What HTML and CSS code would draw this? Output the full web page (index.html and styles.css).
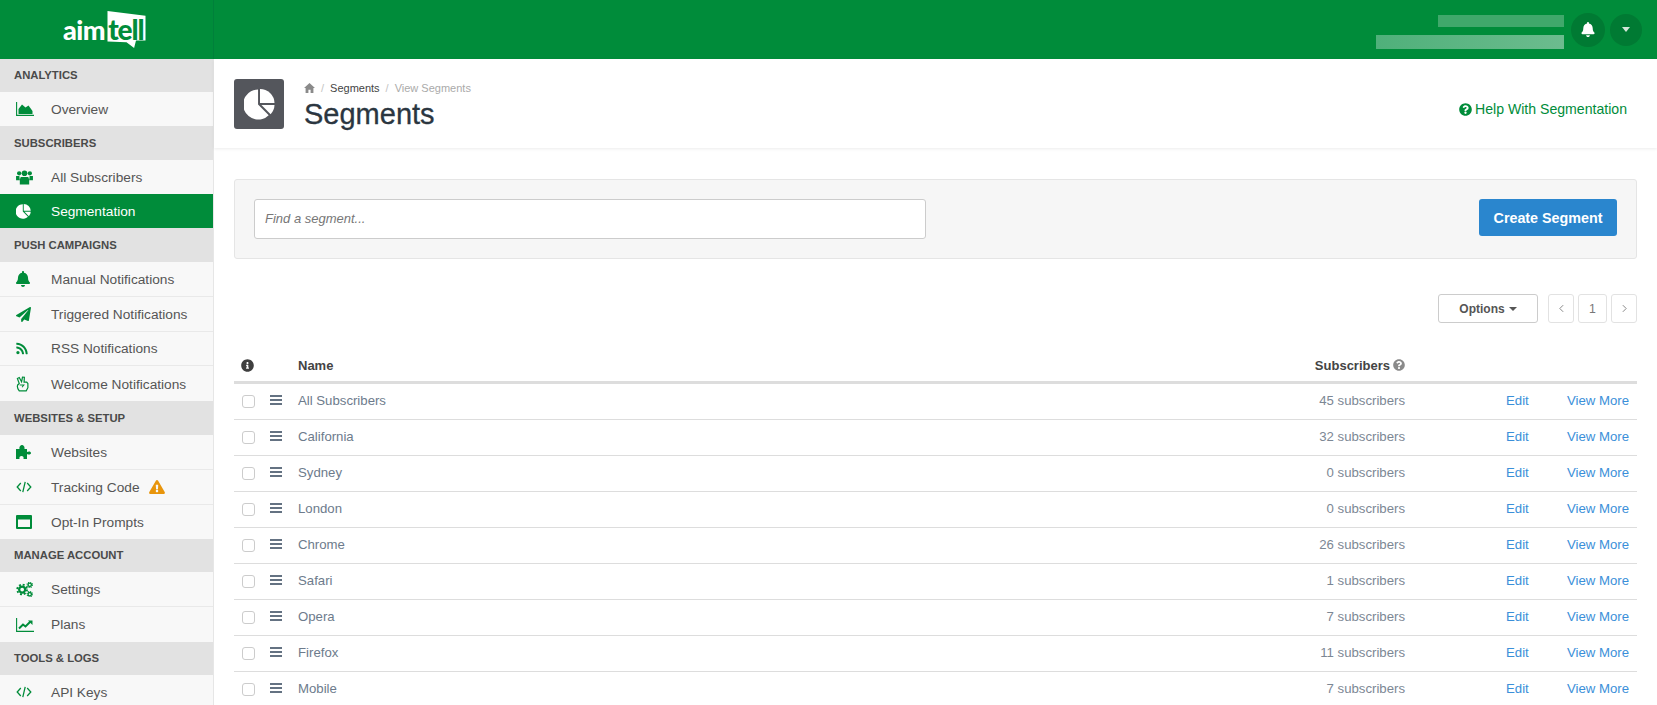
FILE: index.html
```html
<!DOCTYPE html>
<html lang="en">
<head>
<meta charset="utf-8">
<title>Segments</title>
<link rel="stylesheet" href="styles.css">
</head>
<body>
<svg class="defs" width="0" height="0" aria-hidden="true">
  <symbol id="i-pie" viewBox="0 0 32 32"><path d="M14.500 .5A15.500 15.500 0 1 0 25.500 27L14.500 16Z"/><path d="M16.500 0A15 15 0 0 1 31.500 14.500H16.500Z"/><path d="M18 16.500H31.500A15 15 0 0 1 27.500 26Z"/></symbol>
  <symbol id="i-bell" viewBox="0 0 448 512"><path d="M224 512c35.320 0 63.970-28.650 63.970-64H160.030c0 35.350 28.650 64 63.970 64zm215.390-149.710c-19.320-20.760-55.470-51.990-55.470-154.290 0-77.700-54.480-139.900-127.940-155.160V32c0-17.670-14.320-32-31.980-32s-31.980 14.330-31.980 32v20.840C118.560 68.100 64.080 130.300 64.080 208c0 102.300-36.150 133.530-55.470 154.290-6 6.450-8.660 14.160-8.610 21.710.11 16.400 12.980 32 32.100 32h383.800c19.120 0 32-15.600 32.100-32 .05-7.550-2.610-15.270-8.610-21.710z"/></symbol>
  <symbol id="i-plane" viewBox="0 0 512 512"><path d="M476 3.200L12.500 270.600c-18.100 10.400-15.800 35.600 2.200 43.200L121 358.400l287.300-253.200c5.500-4.900 13.300 2.600 8.600 8.300L176 407v80.500c0 23.600 28.500 32.900 42.500 15.800L282 426l124.600 52.200c14.200 6 30.400-2.900 33-18.200l72-432C515 7.800 493.300-6.800 476 3.200z"/></symbol>
  <symbol id="i-rss" viewBox="0 0 448 512"><path d="M128.081 415.959c0 35.369-28.672 64.041-64.041 64.041S0 451.328 0 415.959s28.672-64.041 64.041-64.041 64.040 28.673 64.040 64.041zm175.660 47.250c-8.354-154.600-132.185-278.587-286.950-286.950C7.656 175.765 0 183.105 0 192.253v48.069c0 8.415 6.490 15.472 14.887 16.018 111.832 7.284 201.473 96.702 208.772 208.772.547 8.397 7.604 14.887 16.018 14.887h48.069c9.149.001 16.489-7.655 15.995-16.790zm144.249.288C439.596 229.677 251.465 40.445 16.503 32.010 7.473 31.686 0 38.981 0 48.016v48.068c0 8.625 6.835 15.645 15.453 15.999 191.179 7.839 344.627 161.316 352.465 352.465.353 8.618 7.373 15.453 15.999 15.453h48.068c9.034-.001 16.329-7.474 16.005-16.504z"/></symbol>
  <symbol id="i-warn" viewBox="0 0 576 512"><path d="M569.517 440.013C587.975 472.007 564.806 512 527.940 512H48.054c-36.937 0-59.999-40.055-41.577-71.987L246.423 23.985c18.467-32.009 64.720-31.951 83.154 0l239.940 416.028zM288 354c-25.405 0-46 20.595-46 46s20.595 46 46 46 46-20.595 46-46-20.595-46-46-46zm-43.673-165.346l7.418 136c.347 6.364 5.609 11.346 11.982 11.346h48.546c6.373 0 11.635-4.982 11.982-11.346l7.418-136c.375-6.874-5.098-12.654-11.982-12.654h-63.383c-6.884 0-12.356 5.780-11.981 12.654z"/></symbol>
  <symbol id="i-question" viewBox="0 0 512 512"><path d="M504 256c0 136.997-111.043 248-248 248S8 392.997 8 256C8 119.083 119.043 8 256 8s248 111.083 248 248zM262.655 90c-54.497 0-89.255 22.957-116.549 63.758-3.536 5.286-2.353 12.415 2.715 16.258l34.699 26.310c5.205 3.947 12.621 3.008 16.665-2.122 17.864-22.658 30.113-35.797 57.303-35.797 20.429 0 45.698 13.148 45.698 32.958 0 14.976-12.363 22.667-32.534 33.976C247.128 238.528 216 254.941 216 296v4c0 6.627 5.373 12 12 12h56c6.627 0 12-5.373 12-12v-1.333c0-28.462 83.186-29.647 83.186-106.667 0-58.002-60.165-102-116.531-102zM256 338c-25.365 0-46 20.635-46 46 0 25.364 20.635 46 46 46s46-20.636 46-46c0-25.365-20.635-46-46-46z"/></symbol>
  <symbol id="i-info" viewBox="0 0 512 512"><path d="M256 8C119.043 8 8 119.083 8 256c0 136.997 111.043 248 248 248s248-111.003 248-248C504 119.083 392.957 8 256 8zm0 110c23.196 0 42 18.804 42 42s-18.804 42-42 42-42-18.804-42-42 18.804-42 42-42zm56 254c0 6.627-5.373 12-12 12h-88c-6.627 0-12-5.373-12-12v-24c0-6.627 5.373-12 12-12h12v-64h-12c-6.627 0-12-5.373-12-12v-24c0-6.627 5.373-12 12-12h64c6.627 0 12 5.373 12 12v100h12c6.627 0 12 5.373 12 12v24z"/></symbol>
  <symbol id="i-code" viewBox="0 0 20 20"><path d="M6 5L1.500 10 6 15M14 5l4.500 5L14 15M11.500 3.500L8.500 16.500" fill="none" stroke="currentColor" stroke-width="1.600"/></symbol>
  <symbol id="i-bars" viewBox="0 0 12 10"><path d="M0 0h12v2H0zM0 4h12v2H0zM0 8h12v2H0z"/></symbol>
</svg>

<header class="topbar">
  <div class="brand">
    <span class="brand-aim">aim</span>
    <span class="brand-bubble">
      <svg class="bubble-shape" viewBox="0 0 42 40"><path d="M1 0L41 5V31H31L29 39 21 33 1 32Z" fill="#fff"/></svg>
      <span class="brand-tell">tell</span>
    </span>
  </div>
  <div class="account">
    <div class="redactions">
      <div class="redact-one"></div>
      <div class="redact-two"></div>
    </div>
    <button class="round round-bell"><svg class="bell-icon"><use href="#i-bell"/></svg></button>
    <button class="round round-caret"><span class="caret-light"></span></button>
  </div>
</header>

<div class="shell">
  <nav class="sidebar">
    <div class="nav-head nav-head-short">ANALYTICS</div>
    <a class="nav-item nav-single"><span class="nav-icon"><svg viewBox="0 0 18 14" width="18" height="14"><path d="M.6 0v13.400H18" fill="none" stroke="currentColor" stroke-width="1.100"/><path d="M2.500 12V7L6 2.500 9.500 5.500 12.500 3.500 16.500 9V12Z"/></svg></span>Overview</a>
    <div class="nav-head">SUBSCRIBERS</div>
    <a class="nav-item nav-single"><span class="nav-icon"><svg viewBox="0 0 18 16" width="17" height="15"><circle cx="3.300" cy="3.500" r="2.300"/><circle cx="14.700" cy="3.500" r="2.300"/><circle cx="9" cy="3.500" r="3"/><path d="M0 6.500h3.500L4 11H0ZM18 6.500h-3.500L14 11h4Z"/><path d="M5 7.500h8L14 10V15.500H4V10Z"/></svg></span>All Subscribers</a>
    <a class="nav-item nav-single nav-active"><span class="nav-icon"><svg width="15" height="15"><use href="#i-pie"/></svg></span>Segmentation</a>
    <div class="nav-head">PUSH CAMPAIGNS</div>
    <a class="nav-item"><span class="nav-icon"><svg width="14" height="16"><use href="#i-bell"/></svg></span>Manual Notifications</a>
    <a class="nav-item"><span class="nav-icon"><svg width="15" height="15"><use href="#i-plane"/></svg></span>Triggered Notifications</a>
    <a class="nav-item"><span class="nav-icon"><svg width="12" height="13"><use href="#i-rss"/></svg></span>RSS Notifications</a>
    <a class="nav-item nav-last"><span class="nav-icon"><svg viewBox="0 0 14 17" width="13" height="16"><path d="M3.500 15.800C2 14 1 11.500 1.800 9.500L3.500 8 1.500 2.500 3.500 1.500 6 6 7 1 9 1.200 8.700 6.500H11.500L12.800 8V12.500L11 15.800Z" fill="none" stroke="currentColor" stroke-width="1.300"/><path d="M4 9.500H8.500L6.500 12" fill="none" stroke="currentColor" stroke-width="1.100"/></svg></span>Welcome Notifications</a>
    <div class="nav-head">WEBSITES &amp; SETUP</div>
    <a class="nav-item"><span class="nav-icon"><svg viewBox="0 0 15 14" width="15" height="14"><path d="M0 4H3.500C3 1 5 0 6 0S9 1 8.500 4H11V7C13 5.800 15 6.500 15 8S13 10 11 9V14H7.500C8 12 7 11 5.500 11S3 12 3.500 14H0Z"/></svg></span>Websites</a>
    <a class="nav-item"><span class="nav-icon"><svg width="16" height="16"><use href="#i-code"/></svg></span>Tracking Code<svg class="warn"><use href="#i-warn"/></svg></a>
    <a class="nav-item nav-last"><span class="nav-icon"><svg viewBox="0 0 16 14" width="16" height="14"><path d="M1 0H15A1 1 0 0 1 16 1V13A1 1 0 0 1 15 14H1A1 1 0 0 1 0 13V1A1 1 0 0 1 1 0ZM2 4.500V12H14V4.500Z" fill-rule="evenodd"/></svg></span>Opt-In Prompts</a>
    <div class="nav-head nav-head-short">MANAGE ACCOUNT</div>
    <a class="nav-item"><span class="nav-icon"><svg viewBox="0 0 18 16" width="17" height="15"><g fill="none" stroke="currentColor"><circle cx="6.500" cy="8" r="3.200" stroke-width="2.400"/><circle cx="6.500" cy="8" r="5.200" stroke-width="2" stroke-dasharray="2.100 1.980"/><circle cx="14.600" cy="3" r="1.800" stroke-width="1.500"/><circle cx="14.600" cy="3" r="2.900" stroke-width="1.100" stroke-dasharray="1.200 1.080"/><circle cx="14.600" cy="13" r="1.800" stroke-width="1.500"/><circle cx="14.600" cy="13" r="2.900" stroke-width="1.100" stroke-dasharray="1.200 1.080"/></g></svg></span>Settings</a>
    <a class="nav-item nav-last"><span class="nav-icon"><svg viewBox="0 0 18 14" width="18" height="14"><g fill="none" stroke="currentColor"><path d="M.6 0v13.400H18" stroke-width="1.100"/><path d="M3 10.500L7 6.500 9.500 8.500 14.500 3.500" stroke-width="2"/><path d="M12 2.500H16.500V7Z" fill="currentColor" stroke="none"/></g></svg></span>Plans</a>
    <div class="nav-head nav-head-short">TOOLS &amp; LOGS</div>
    <a class="nav-item"><span class="nav-icon"><svg width="16" height="16"><use href="#i-code"/></svg></span>API Keys</a>
  </nav>

  <main class="main">
    <section class="page-head">
      <div class="head-icon"><svg width="31" height="31"><use href="#i-pie"/></svg></div>
      <div class="head-text">
        <div class="crumbs">
          <svg class="home" viewBox="0 0 12 11"><path d="M6 0L12 5.500H10.300V11H7.200V7.500H4.800V11H1.700V5.500H0Z"/></svg>
          <span class="sep">/</span><span class="crumb-on">Segments</span><span class="sep">/</span><span class="crumb-off">View Segments</span>
        </div>
        <h1>Segments</h1>
      </div>
      <a class="help"><svg class="help-icon"><use href="#i-question"/></svg>Help With Segmentation</a>
    </section>

    <section class="content">
      <div class="filter">
        <input class="search" placeholder="Find a segment...">
        <button class="create">Create Segment</button>
      </div>

      <div class="tools">
        <button class="options">Options<span class="caret-dark"></span></button>
        <div class="pager">
          <button class="page-btn page-prev"><svg viewBox="0 0 6 10" width="5" height="9"><path d="M5 1L1 5l4 4" fill="none" stroke="currentColor" stroke-width="1.200"/></svg></button>
          <button class="page-btn page-num">1</button>
          <button class="page-btn page-next"><svg viewBox="0 0 6 10" width="5" height="9"><path d="M1 1l4 4-4 4" fill="none" stroke="currentColor" stroke-width="1.200"/></svg></button>
        </div>
      </div>

      <div class="table">
        <div class="row row-head">
          <span><svg class="info"><use href="#i-info"/></svg></span>
          <span></span>
          <span>Name</span>
          <span class="num">Subscribers<svg class="q"><use href="#i-question"/></svg></span>
          <span></span>
          <span></span>
        </div>
        <div class="row"><span class="check"></span><svg class="bars"><use href="#i-bars"/></svg><span class="name">All Subscribers</span><span class="num">45 subscribers</span><a class="edit">Edit</a><a class="more">View More</a></div>
        <div class="row"><span class="check"></span><svg class="bars"><use href="#i-bars"/></svg><span class="name">California</span><span class="num">32 subscribers</span><a class="edit">Edit</a><a class="more">View More</a></div>
        <div class="row"><span class="check"></span><svg class="bars"><use href="#i-bars"/></svg><span class="name">Sydney</span><span class="num">0 subscribers</span><a class="edit">Edit</a><a class="more">View More</a></div>
        <div class="row"><span class="check"></span><svg class="bars"><use href="#i-bars"/></svg><span class="name">London</span><span class="num">0 subscribers</span><a class="edit">Edit</a><a class="more">View More</a></div>
        <div class="row"><span class="check"></span><svg class="bars"><use href="#i-bars"/></svg><span class="name">Chrome</span><span class="num">26 subscribers</span><a class="edit">Edit</a><a class="more">View More</a></div>
        <div class="row"><span class="check"></span><svg class="bars"><use href="#i-bars"/></svg><span class="name">Safari</span><span class="num">1 subscribers</span><a class="edit">Edit</a><a class="more">View More</a></div>
        <div class="row"><span class="check"></span><svg class="bars"><use href="#i-bars"/></svg><span class="name">Opera</span><span class="num">7 subscribers</span><a class="edit">Edit</a><a class="more">View More</a></div>
        <div class="row"><span class="check"></span><svg class="bars"><use href="#i-bars"/></svg><span class="name">Firefox</span><span class="num">11 subscribers</span><a class="edit">Edit</a><a class="more">View More</a></div>
        <div class="row"><span class="check"></span><svg class="bars"><use href="#i-bars"/></svg><span class="name">Mobile</span><span class="num">7 subscribers</span><a class="edit">Edit</a><a class="more">View More</a></div>
      </div>
    </section>
  </main>
</div>
</body>
</html>
```

FILE: styles.css
```css
* { box-sizing: border-box; }
html, body { margin: 0; height: 100%; }
body {
  height: 705px;
  overflow: hidden;
  background: #fff;
  color: #555;
  font-family: "Liberation Sans", Arial, sans-serif;
  font-size: 13.2px;
}
button, input { font-family: inherit; }
svg { fill: currentColor; display: block; }
.defs { position: absolute; }

.topbar {
  height: 59px;
  background: #008c3a;
  display: flex;
  align-items: stretch;
  justify-content: space-between;
}
.brand {
  width: 214px;
  border-right: 1px solid #00803a;
  display: flex;
  align-items: flex-start;
  padding: 11px 0 0 63px;
}
.brand-aim {
  color: #fff;
  font-family: Lato, sans-serif;
  font-weight: 900;
  font-size: 27px;
  line-height: 38px;
  letter-spacing: -0.5px;
}
.brand-bubble {
  position: relative;
  width: 41px;
  height: 38px;
  margin-left: 1px;
}
.bubble-shape { position: absolute; inset: 0; width: 100%; height: 100%; }
.brand-tell {
  position: relative;
  display: block;
  color: #008c3a;
  font-family: Lato, sans-serif;
  font-weight: 900;
  font-size: 28px;
  line-height: 36px;
  padding-left: 2px;
  letter-spacing: -1.1px;
}
.account {
  display: flex;
  align-items: center;
  padding-right: 15px;
}
.redactions { width: 188px; margin-right: 7px; display: flex; flex-direction: column; align-items: flex-end; gap: 8px; margin-top: 5px; }
.redact-one { width: 126px; height: 12px; background: #40a86b; }
.redact-two { width: 188px; height: 14px; background: linear-gradient(90deg, #4fb07a, #6cbc8e); }
.round {
  border: 0;
  border-radius: 50%;
  background: #007a33;
  padding: 0;
  display: flex;
  align-items: center;
  justify-content: center;
}
.round-bell { width: 34px; height: 34px; margin-right: 5px; color: #fff; }
.round-caret { width: 32px; height: 32px; }
.bell-icon { width: 14px; height: 15px; }
.caret-light { border: 5px solid transparent; border-top: 5px solid #d5e6da; border-bottom: 0; border-left-width: 4px; border-right-width: 4px; }

.shell { display: flex; height: 646px; }
.sidebar {
  width: 214px;
  flex: none;
  background: #f8f8f8;
  border-right: 1px solid #e6e6e6;
  overflow: hidden;
}
.nav-head {
  height: 34px;
  background: #e2e2e2;
  color: #4a4a4a;
  font-weight: 700;
  font-size: 11.3px;
  line-height: 34px;
  padding-left: 14px;
}
.nav-head-short { height: 33px; line-height: 33px; }
.nav-item {
  height: 34.75px;
  display: flex;
  align-items: center;
  color: #555;
  border-bottom: 1px solid #e9e9e9;
  font-size: 13.7px;
  padding-top: 1px;
}
.nav-single, .nav-last { border-bottom: 0; }
.nav-single { height: 34px; padding-top: 0; }
.nav-icon {
  width: 51px;
  flex: none;
  display: flex;
  justify-content: flex-start;
  padding-left: 16px;
  color: #008c3a;
}
.nav-active { background: #008c3a; color: #fff; }
.nav-active .nav-icon { color: #fff; }
.warn { width: 16px; height: 14px; margin-left: 9px; color: #e8950c; }

.main { flex: 1; min-width: 0; }
.page-head {
  height: 89px;
  display: flex;
  align-items: flex-start;
  padding: 20px 30px 0 20px;
  background: #fff;
  box-shadow: 0 1px 3px rgba(0, 0, 0, .08);
}
.head-icon {
  width: 50px;
  height: 50px;
  background: #54565c;
  border-radius: 3px;
  color: #fff;
  display: flex;
  align-items: center;
  justify-content: center;
}
.head-text { margin: 2px 0 0 20px; flex: 1; }
.crumbs { display: flex; align-items: center; font-size: 11px; height: 14px; color: #999; }
.home { width: 11px; height: 10px; color: #8a8a8a; }
.sep { margin: 0 6px; color: #c4c4c4; }
.crumb-on { color: #444; }
.crumb-off { color: #aaa; }
h1 {
  margin: 2px 0 0;
  font-size: 29px;
  line-height: 35px;
  font-weight: 400;
  color: #2b3640;
  -webkit-text-stroke: .3px #2b3640;
}
.help { display: flex; align-items: center; color: #008c3a; font-size: 14.1px; margin-top: 22px; }
.help-icon { width: 13px; height: 13px; margin-right: 3px; }

.content { padding: 31px 20px 0; }
.filter {
  height: 80px;
  background: #f6f6f6;
  border: 1px solid #e5e5e5;
  border-radius: 3px;
  display: flex;
  align-items: flex-start;
  justify-content: space-between;
  padding: 19px 19px 0;
}
.search {
  width: 672px;
  height: 40px;
  border: 1px solid #ccc;
  border-radius: 3px;
  background: #fff;
  padding: 0 10px 2px;
  font-size: 13px;
}
.search::placeholder { font-style: italic; color: #777; opacity: 1; }
.create {
  width: 138px;
  height: 37px;
  border: 0;
  border-radius: 3px;
  background: #2a86ce;
  color: #fff;
  font-weight: 700;
  font-size: 14.3px;
}
.tools {
  display: flex;
  justify-content: flex-end;
  margin-top: 35px;
  gap: 10px;
}
.options {
  width: 100px;
  height: 29px;
  border: 1px solid #ccc;
  border-radius: 3px;
  background: #fff;
  color: #555;
  font-weight: 700;
  font-size: 12px;
  display: flex;
  align-items: center;
  justify-content: center;
  padding: 0;
}
.caret-dark { border: 4px solid transparent; border-top-color: #555; border-bottom: 0; margin-left: 4px; }
.pager { display: flex; gap: 4px; }
.page-btn {
  width: 26px;
  height: 29px;
  border: 1px solid #e2e2e2;
  border-radius: 3px;
  background: #fff;
  color: #888;
  font-size: 12.3px;
  padding: 0;
  display: flex;
  align-items: center;
  justify-content: center;
}
.page-num { width: 29px; color: #777; }

.table { margin-top: 23px; }
.row {
  height: 36px;
  display: grid;
  grid-template-columns: 36px 28px 1fr 130px 162px 70px;
  align-items: center;
  border-bottom: 1px solid #ddd;
  color: #6d7b8c;
  padding-bottom: 2px;
}
.row-head {
  height: 38px;
  border-bottom: 3px solid #ddd;
  color: #444;
  font-weight: 700;
  font-size: 13px;
  padding: 3px 0 0;
}
.info { width: 13px; height: 13px; margin-left: 7px; color: #3f3f3f; }
.q { width: 12px; height: 12px; margin-left: 3px; color: #8a8a8a; }
.num { display: flex; justify-content: flex-end; align-items: center; }
.row:not(.row-head) .num { color: #7c8794; }
.check {
  width: 13px;
  height: 13px;
  margin: 1px 0 0 8px;
  border: 1px solid #ccc;
  border-radius: 3px;
  background: #fff;
}
.bars { width: 12px; height: 10px; color: #647282; margin-top: -1px; }
.edit { color: #3b8fd9; padding-left: 101px; }
.more { color: #3b8fd9; }
```
